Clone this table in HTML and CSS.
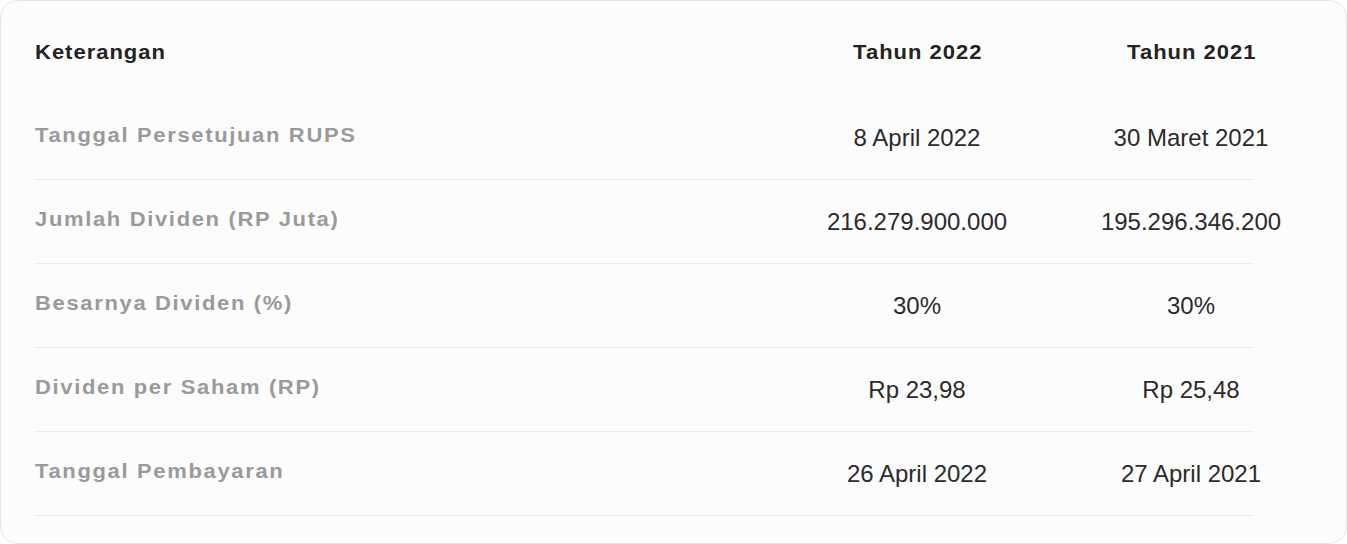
FILE: index.html
```html
<!DOCTYPE html>
<html lang="id">
<head>
<meta charset="utf-8">
<title>Dividen</title>
<link rel="stylesheet" href="styles.css">
</head>
<body>
<div class="card">
  <div class="table">
    <div class="row head">
      <div class="cell label-col"><span class="wide left">Keterangan</span></div>
      <div class="cell val"><span class="wide">Tahun 2022</span></div>
      <div class="cell val"><span class="wide">Tahun 2021</span></div>
    </div>
    <div class="row">
      <div class="cell label-col label"><span class="wide left">Tanggal Persetujuan RUPS</span></div>
      <div class="cell val">8 April 2022</div>
      <div class="cell val">30 Maret 2021</div>
    </div>
    <div class="row">
      <div class="cell label-col label"><span class="wide left">Jumlah Dividen (RP Juta)</span></div>
      <div class="cell val">216.279.900.000</div>
      <div class="cell val">195.296.346.200</div>
    </div>
    <div class="row">
      <div class="cell label-col label"><span class="wide left">Besarnya Dividen (%)</span></div>
      <div class="cell val">30%</div>
      <div class="cell val">30%</div>
    </div>
    <div class="row">
      <div class="cell label-col label"><span class="wide left">Dividen per Saham (RP)</span></div>
      <div class="cell val">Rp 23,98</div>
      <div class="cell val">Rp 25,48</div>
    </div>
    <div class="row">
      <div class="cell label-col label"><span class="wide left">Tanggal Pembayaran</span></div>
      <div class="cell val">26 April 2022</div>
      <div class="cell val">27 April 2021</div>
    </div>
  </div>
</div>
</body>
</html>
```

FILE: styles.css
```css
html, body {
  margin: 0;
  padding: 0;
  background: #ffffff;
}

body {
  font-family: "Liberation Sans", Arial, sans-serif;
  color: #2b2b2b;
}

.card {
  box-sizing: border-box;
  width: 1347px;
  height: 544px;
  border: 1px solid #e4e4e4;
  border-radius: 18px;
  background: #fcfcfc;
  padding: 0 0 27px 34px;
}

.table {
  width: 1218px;
  display: flex;
  flex-direction: column;
}

.row {
  box-sizing: border-box;
  display: grid;
  grid-template-columns: 757px 250px 298px;
  align-items: center;
  height: 84px;
  border-bottom: 1px solid #ebebeb;
}

.row.head {
  height: 95px;
  padding-top: 7px;
  border-bottom: none;
}

.cell {
  white-space: nowrap;
}

.val {
  text-align: center;
  font-size: 24px;
  color: #2b2b2b;
}

.wide {
  display: inline-block;
  transform: scaleX(1.1);
  transform-origin: center;
}

.wide.left {
  transform-origin: left center;
}

.head .cell {
  font-size: 20px;
  font-weight: 700;
  letter-spacing: 0.9px;
  color: #232323;
}

.head .val {
  padding-left: 2px;
}

.label {
  font-size: 20px;
  font-weight: 700;
  letter-spacing: 1.5px;
  color: #9a9a9a;
  padding-bottom: 5px;
}
```
